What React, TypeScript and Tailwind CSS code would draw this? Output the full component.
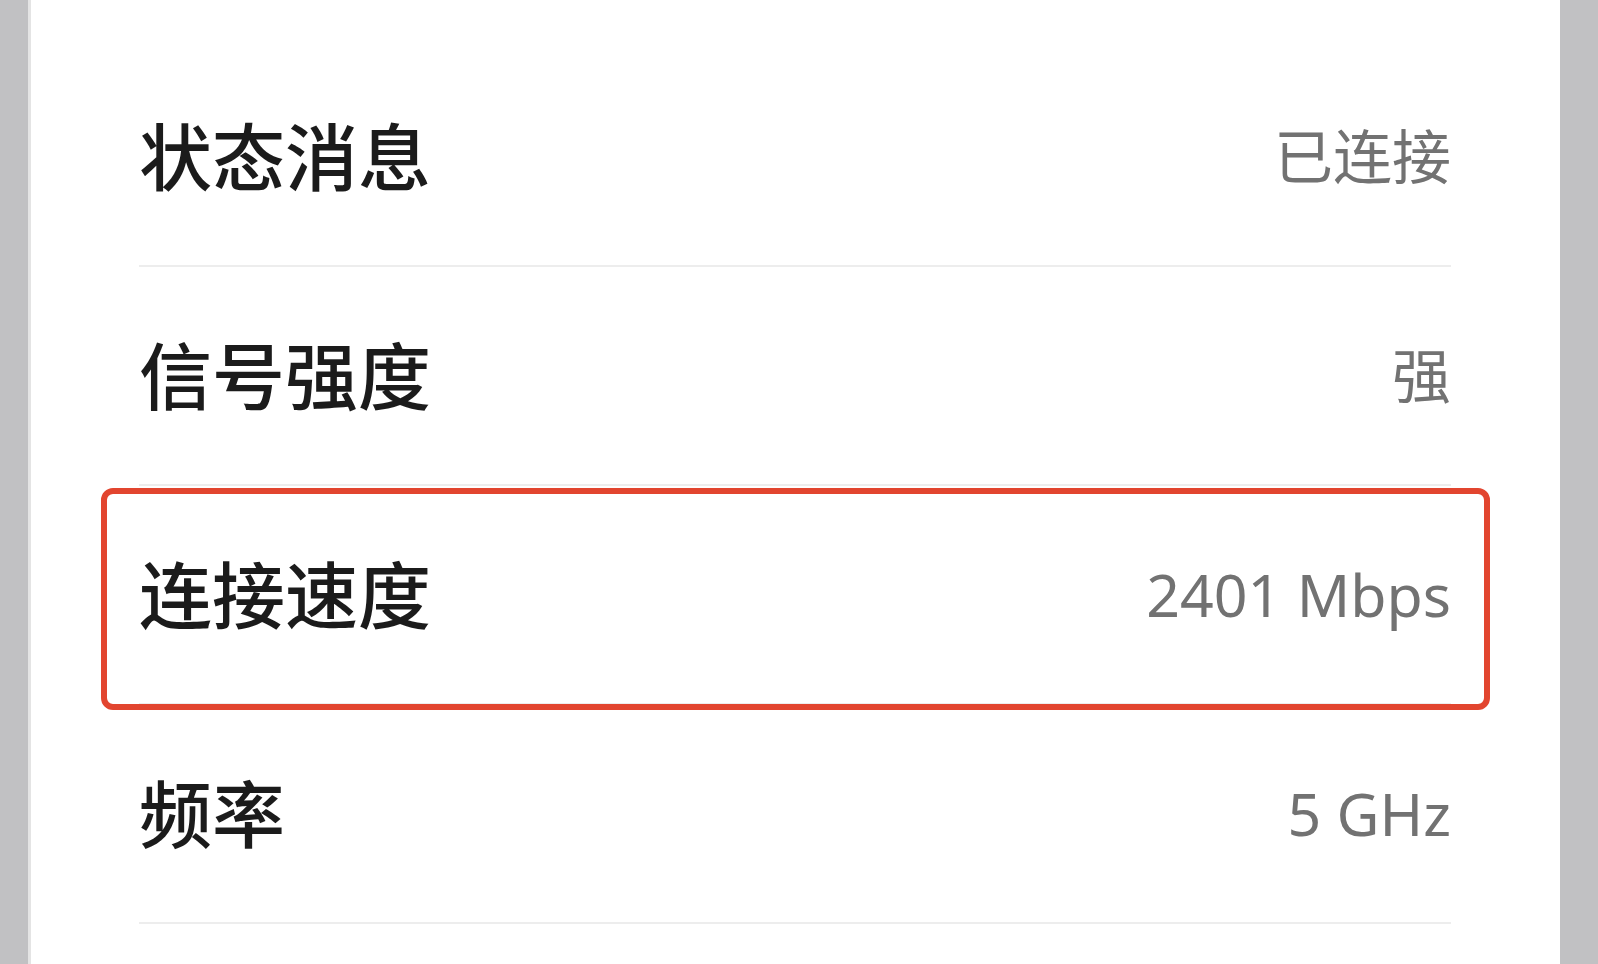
import React from "react";

interface InfoRow {
  label: string;
  value: string;
  highlight?: boolean;
}

const rows: InfoRow[] = [
  { label: "状态消息", value: "已连接" },
  { label: "信号强度", value: "强" },
  { label: "连接速度", value: "2401 Mbps", highlight: true },
  { label: "频率", value: "5 GHz" },
];

const Row: React.FC<{ row: InfoRow }> = ({ row }) => (
  <>
    <div className="relative flex h-[217px] items-center justify-between">
      <span className="text-[73px] font-medium leading-none text-[#1b1b1b]">
        {row.label}
      </span>
      <span className="text-[59px] leading-none text-[#727272]">
        {row.value}
      </span>
      {/* red outline around the selected row */}
      {row.highlight && (
        <div className="pointer-events-none absolute top-[2px] bottom-[-7px] left-[-38px] right-[-39px] rounded-[12px] border-[6px] border-[#e2452f]" />
      )}
    </div>
    <div className="h-[2px] bg-[#ededed]" />
  </>
);

export default function App() {
  return (
    <div
      className="flex h-[964px] w-full overflow-hidden bg-[#c1c1c3]"
      style={{ fontFamily: '"Noto Sans", "Noto Sans CJK SC", sans-serif' }}
    >
      <div className="ml-[28px] h-full w-[1532px] border-l-[3px] border-[#e4e4e4] bg-white pt-[48px] pl-[108px] pr-[109px]">
        {rows.map((row) => (
          <Row key={row.label} row={row} />
        ))}
      </div>
    </div>
  );
}
